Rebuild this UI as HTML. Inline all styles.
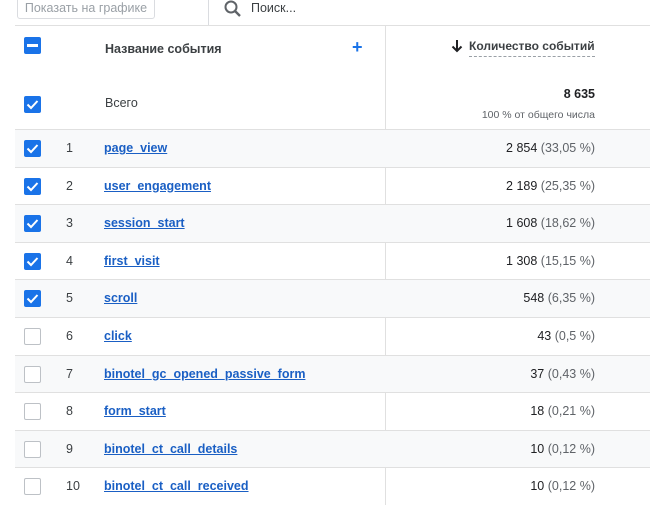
<!DOCTYPE html><html><head><meta charset="utf-8"><style>
*{margin:0;padding:0;box-sizing:border-box}
body{width:650px;height:512px;background:#fff;font-family:"Liberation Sans",Arial,sans-serif;color:#3c4043;position:relative;overflow:hidden;font-size:12.5px}
.a{position:absolute}
.row{position:absolute;left:15px;width:635px;height:38px;border-top:1px solid #e0e0e0}
.g{background:#f8f9fa}
.cb{position:absolute;left:9px;width:17px;height:17px;border-radius:2px}
.on{background:#1a73e8}
.off{border:1.5px solid #bdc1c6;background:#fff}
.n{position:absolute;left:51px}
.l{position:absolute;left:89px;color:#1a5fc4;text-decoration:underline;font-weight:bold}
.v{position:absolute;right:55px;color:#202124}
.v span{color:#5f6368}
</style></head><body>
<div class="a" style="left:17px;top:-3px;width:138px;height:22px;border:1px solid #dadce0;border-radius:3px;color:#9aa0a6;font-size:12.5px;text-align:center;line-height:20px">Показать на графике</div>
<div class="a" style="left:208px;top:0;width:1px;height:25px;background:#dadce0"></div>
<svg class="a" style="left:223px;top:-1px" width="20" height="20" viewBox="0 0 20 20"><circle cx="8" cy="8" r="5.5" fill="none" stroke="#5f6368" stroke-width="2"/><path d="M12 12L17 17" stroke="#5f6368" stroke-width="2.4"/></svg>
<div class="a" style="left:251px;top:1px;color:#3c4043">Поиск...</div>
<div class="a" style="left:15px;top:25px;width:635px;height:1px;background:#e0e0e0"></div>
<div class="a" style="left:385px;top:26px;width:1px;height:479px;background:#e0e0e0"></div>
<div class="a" style="left:24px;top:37px;width:17px;height:17px;background:#1a73e8;border-radius:2px"><div style="position:absolute;left:3px;top:7px;width:11px;height:2.5px;background:#fff"></div></div>
<div class="a" style="left:105px;top:42px;color:#3c4043;font-size:12.5px;font-weight:bold">Название события</div>
<div class="a" style="left:352px;top:37px;color:#1a73e8;font-size:18px;font-weight:bold">+</div>
<svg class="a" style="left:451px;top:39px" width="12" height="14" viewBox="0 0 12 14"><path d="M6 1V12M1.5 7.5L6 12L10.5 7.5" fill="none" stroke="#202124" stroke-width="2"/></svg>
<div class="a" style="left:469px;top:39px;color:#3c4043;font-weight:bold;font-size:12px;border-bottom:1px dashed #9aa0a6;padding-bottom:3px">Количество событий</div>
<div class="a on" style="left:24px;top:96px;width:17px;height:17px;border-radius:2px"><svg width="17" height="17" viewBox="0 0 17 17"><path d="M3.5 8.5L7 12L13.5 5" fill="none" stroke="#fff" stroke-width="2"/></svg></div>
<div class="a" style="left:105px;top:96px">Всего</div>
<div class="a" style="right:55px;top:87px;font-weight:bold;color:#202124">8 635</div>
<div class="a" style="right:55px;top:109px;font-size:10.5px;color:#5f6368">100 % от общего числа</div>
<div id="rows"></div>
<script>
var d=[["page_view","2 854","33,05 %"],["user_engagement","2 189","25,35 %"],["session_start","1 608","18,62 %"],["first_visit","1 308","15,15 %"],["scroll","548","6,35 %"],["click","43","0,5 %"],["binotel_gc_opened_passive_form","37","0,43 %"],["form_start","18","0,21 %"],["binotel_ct_call_details","10","0,12 %"],["binotel_ct_call_received","10","0,12 %"]];
var h="";
for(var i=0;i<10;i++){var t=129+i*37.6;var on=i<5;
h+='<div class="row'+(i%2==0?' g':'')+'" style="top:'+t+'px">'+
'<div class="cb '+(on?'on':'off')+'" style="top:10px">'+(on?'<svg width="17" height="17" viewBox="0 0 17 17"><path d="M3.5 8.5L7 12L13.5 5" fill="none" stroke="#fff" stroke-width="2"/></svg>':'')+'</div>'+
'<div class="n" style="top:11px">'+(i+1)+'</div><div class="l" style="top:11px">'+d[i][0]+'</div><div class="v" style="top:11px">'+d[i][1]+' <span>('+d[i][2]+')</span></div></div>';}
document.getElementById("rows").innerHTML=h;
</script>
</body></html>
